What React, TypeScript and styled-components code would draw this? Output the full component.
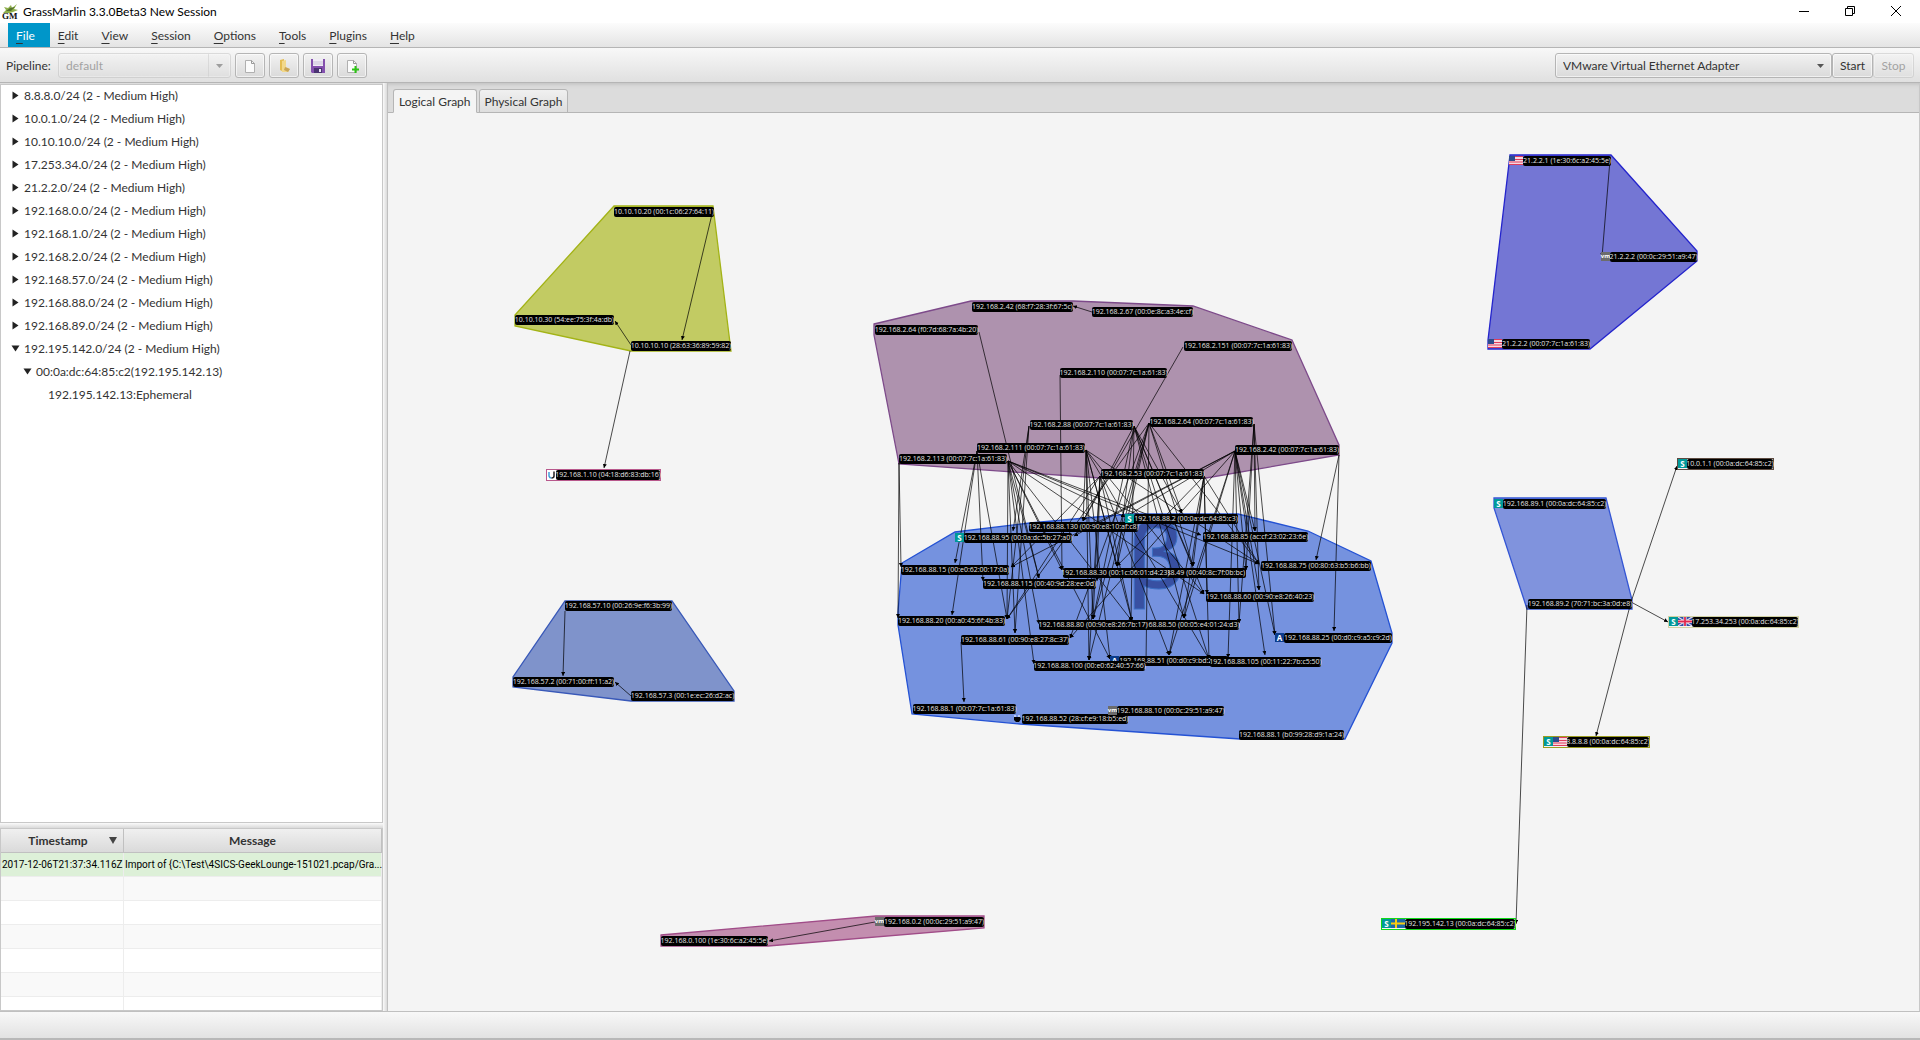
import React, { useState } from 'react';
import styled, { createGlobalStyle, css } from 'styled-components';

const UI_FONT = 'Lato, "Open Sans", sans-serif';
const NODE_FONT = '"Open Sans", "Noto Sans", sans-serif';

const GlobalStyle = createGlobalStyle`
  *, *::before, *::after { box-sizing: border-box; }
  body { margin: 0; background: #fff; }
  button, select { font: inherit; color: inherit; margin: 0; }
`;

const Window = styled.div`
  display: flex;
  flex-direction: column;
  height: 100vh;
  overflow: hidden;
  font-family: ${UI_FONT};
  font-size: 12px;
  line-height: 16px;
  color: #333;
  background: #f4f4f4;
`;

/* ---------- title bar ---------- */

const TitleBar = styled.header`
  display: flex;
  align-items: center;
  flex: 0 0 23px;
  padding-left: 2px;
  gap: 4px;
  background: #fff;
  color: #000;
`;

const Title = styled.h1`
  flex: 1;
  margin: 0;
  font-size: 12px;
  font-weight: 400;
`;

const WindowButtons = styled.div`
  display: flex;
`;

const WindowButton = styled.button`
  display: flex;
  align-items: center;
  justify-content: center;
  width: 46px;
  height: 22px;
  padding: 0 2px 2px 0;
  border: 0;
  background: none;
`;

/* ---------- menu bar ---------- */

const MenuBar = styled.nav`
  display: flex;
  flex: 0 0 25px;
  padding-left: 8px;
  border-bottom: 1px solid #b5b5b5;
  background: linear-gradient(#fcfcfc, #e4e4e4);
`;

const MenuButton = styled.button<{ $active?: boolean }>`
  padding: 2px 15px 0 8px;
  border: 0;
  background: ${(p) => (p.$active ? '#0096c9' : 'transparent')};
  color: ${(p) => (p.$active ? '#fff' : '#333')};
`;

const Mnemonic = styled.span`
  text-decoration: underline;
  text-decoration-color: #333;
  text-decoration-thickness: 1px;
  text-underline-offset: 3px;
`;

/* ---------- tool bar ---------- */

const ToolBar = styled.div`
  display: flex;
  align-items: center;
  flex: 0 0 35px;
  padding: 1px 6px 0;
  gap: 4px;
  border-bottom: 1px solid #b5b5b5;
  background: linear-gradient(#f8f8f8, #e0e0e0);
`;

const control = css`
  height: 25px;
  border: 1px solid #b5b5b5;
  border-radius: 3px;
  background: linear-gradient(#f2f2f2, #dadada);
  box-shadow: inset 0 0 0 1px rgba(255, 255, 255, 0.6);
  &:disabled { opacity: 0.4; }
`;

const PipelineLabel = styled.label`
  width: 48px;
  white-space: nowrap;
`;

const SelectBox = styled.div<{ $width: number; $split?: boolean }>`
  display: grid;
  width: ${(p) => p.$width}px;
  align-items: center;
  & > * { grid-area: 1 / 1; }
  & > svg {
    justify-self: end;
    margin-right: 8px;
    pointer-events: none;
    opacity: ${(p) => (p.$split ? 0.5 : 1)};
  }
  &::after {
    content: '';
    display: ${(p) => (p.$split ? 'block' : 'none')};
    grid-area: 1 / 1;
    justify-self: end;
    width: 23px;
    height: 23px;
    border-left: 1px solid #d0d0d0;
    pointer-events: none;
  }
`;

const Select = styled.select`
  ${control}
  width: 100%;
  appearance: none;
  padding: 0 24px 0 7px;
  color: #333;
`;

const ToolButton = styled.button<{ $icon?: boolean }>`
  ${control}
  display: flex;
  align-items: center;
  justify-content: center;
  width: ${(p) => (p.$icon ? 30 : 41)}px;
  padding: 0;
`;

const Group = styled.div<{ $end?: boolean }>`
  display: flex;
  gap: ${(p) => (p.$end ? 0 : 4)}px;
  margin-left: ${(p) => (p.$end ? 'auto' : 0)};
`;

/* ---------- main split ---------- */

const Main = styled.main`
  display: grid;
  grid-template-columns: 383px 5px minmax(0, 1fr);
  flex: 1;
  min-height: 0;
  background: #ddd;
`;

const SideColumn = styled.aside`
  display: grid;
  grid-template-rows: minmax(0, 1fr) 5px 183px;
  min-height: 0;
  padding-top: 1px;
`;

const VerticalSplitter = styled.div`
  border-right: 1px solid #c0c0c0;
  background: linear-gradient(90deg, #fafafa, #dadada);
`;

const HorizontalSplitter = styled.div`
  background: linear-gradient(#fafafa, #dadada);
`;

const TreePane = styled.div`
  overflow: hidden;
  border: 1px solid #c8c8c8;
  background: #fff;
`;

const TreeList = styled.ul`
  margin: 0;
  padding: 0;
  list-style: none;
`;

const TreeRow = styled.button<{ $level: number }>`
  display: flex;
  align-items: center;
  gap: 5px;
  width: 100%;
  height: 23px;
  padding: 0 0 2px ${(p) => 11 + p.$level * 12}px;
  border: 0;
  background: none;
  text-align: left;
  white-space: nowrap;
`;

const Disclosure = styled.svg<{ $open: boolean }>`
  width: 7px;
  height: 9px;
  transform: rotate(${(p) => (p.$open ? 90 : 0)}deg);
`;

/* ---------- log table ---------- */

const LogPane = styled.div`
  overflow: hidden;
  border: 1px solid #c8c8c8;
  background: #fff;
`;

const LogTable = styled.table`
  width: 100%;
  border-collapse: separate;
  border-spacing: 0;
  table-layout: fixed;
`;

const HeadCell = styled.th<{ $width?: number }>`
  width: ${(p) => (p.$width ? `${p.$width}px` : 'auto')};
  height: 24px;
  padding: 0;
  border-right: 1px solid #c0c0c0;
  border-bottom: 1px solid #c0c0c0;
  background: linear-gradient(#f0f0f0, #dadada);
  font-weight: 700;
`;

const HeadContent = styled.div`
  display: flex;
  align-items: center;
  padding-right: 6px;
`;

const HeadText = styled.span`
  flex: 1;
  padding-left: 6px;
`;

const LogRow = styled.tr<{ $imported?: boolean }>`
  background: ${(p) => (p.$imported ? '#ddf0d8' : '#fff')};
  &:nth-child(even) { background: #f9f9f9; }
`;

const LogCell = styled.td`
  height: 24px;
  padding: 0 0 0 1px;
  border-right: 1px solid #ededed;
  border-bottom: 1px solid #ededed;
  color: #000;
  font-family: Roboto, sans-serif;
  font-size: 10px;
  white-space: nowrap;
`;

/* ---------- graph ---------- */

const GraphPane = styled.section`
  display: flex;
  flex-direction: column;
  min-width: 0;
  border-right: 1px solid #c8c8c8;
`;

const TabStrip = styled.div`
  display: flex;
  align-items: flex-end;
  flex: 0 0 30px;
  gap: 2px;
  padding-left: 5px;
  box-shadow: inset 0 -1px #b5b5b5, inset 0 4px 4px -3px #bbb;
  background: #dcdcdc;
`;

const Tab = styled.button<{ $active?: boolean }>`
  height: 24px;
  padding: 1px 5px 0;
  border: 1px solid #b5b5b5;
  border-bottom-color: ${(p) => (p.$active ? '#f4f4f4' : '#b5b5b5')};
  border-radius: 3px 3px 0 0;
  background: ${(p) => (p.$active ? '#f4f4f4' : 'linear-gradient(#f0f0f0, #dedede)')};
  white-space: nowrap;
`;

const Canvas = styled.div`
  position: relative;
  flex: 1;
  min-height: 0;
  overflow: hidden;
  background: #f4f4f4;
`;

const Scene = styled.div`
  position: absolute;
  width: 1920px;
  height: 1040px;
`;

const Drawing = styled.svg`
  position: absolute;
  inset: 0;
  font-family: ${NODE_FONT};
`;

const Node = styled.div<{ $frame?: string }>`
  position: absolute;
  display: flex;
  border: ${(p) => (p.$frame ? `1px solid ${p.$frame}` : '0')};
  font-family: ${NODE_FONT};
  & > svg { flex: none; }
`;

const NodeLabel = styled.span`
  display: flex;
  flex: 1;
  justify-content: center;
  min-width: 0;
  height: 10px;
  border-radius: 2px;
  background: #000;
  color: #e4e4e4;
  font-size: 7px;
  line-height: 10px;
  white-space: nowrap;
`;

const Badge = styled.span<{ $color: string; $size: number }>`
  display: flex;
  flex: none;
  justify-content: center;
  width: 9px;
  height: 9px;
  background: ${(p) => p.$color};
  color: #fff;
  font-size: ${(p) => p.$size}px;
  font-weight: 700;
  line-height: 9px;
`;

const StatusBar = styled.footer`
  flex: 0 0 29px;
  border-top: 1px solid #c0c0c0;
  border-bottom: 2px solid #b8b8b8;
  background: linear-gradient(#f8f8f8, #e2e2e2);
`;

/* ---------- data ---------- */

type IconKind = 'S' | 'A' | 'vm' | 'U' | 'apple' | 'us' | 'uk' | 'se';

interface GraphNode {
  x: number;
  y: number;
  w: number;
  text: string;
  icons?: IconKind[];
  frame?: string;
}

const MENUS = ['File', 'Edit', 'View', 'Session', 'Options', 'Tools', 'Plugins', 'Help'];

const NETWORKS = [
  '8.8.8.0/24', '10.0.1.0/24', '10.10.10.0/24', '17.253.34.0/24', '21.2.2.0/24',
  '192.168.0.0/24', '192.168.1.0/24', '192.168.2.0/24', '192.168.57.0/24',
  '192.168.88.0/24', '192.168.89.0/24',
];

const HULLS = [
  { fill: '#c2cb63', stroke: '#a3b316', points: '614,206 713,206 731,351 631,351 515,326 515,315' },
  { fill: '#7f93cb', stroke: '#3858b8', points: '565,601 672,601 734,691 734,701 631,701 513,687 513,677' },
  { fill: '#c38eaf', stroke: '#a04c88', points: '661,935 876,916 984,916 984,928 768,946 661,946' },
  { fill: '#7476d4', stroke: '#2424cc', points: '1510,155 1611,155 1697,251 1697,261 1590,349 1488,349 1488,340' },
  { fill: '#8093dd', stroke: '#3355d4', points: '1494,498 1606,498 1632,600 1632,609 1527,609 1494,508' },
  { fill: '#7592df', stroke: '#2452d4', points: '902,563 955,532 1030,523 1130,514 1238,514 1308,531 1371,561 1392,633 1392,643 1345,739 1240,739 1020,724 912,714 898,625 898,612' },
  { fill: '#ae92ae', stroke: '#7d4a8a', points: '874,324 971,301 1073,301 1193,306 1292,340 1339,445 1339,455 1206,478 1100,478 899,464 874,335' },
];

const NODES: GraphNode[] = [
  { x: 614, y: 207, w: 100, text: '10.10.10.20 (00:1c:06:27:64:11)' },
  { x: 515, y: 315, w: 99, text: '10.10.10.30 (54:ee:75:3f:4a:db)' },
  { x: 631, y: 341, w: 100, text: '10.10.10.10 (28:63:36:89:59:82)' },
  { x: 546, y: 469, w: 115, text: '192.168.1.10 (04:18:d6:83:db:16)', icons: ['U'], frame: '#b8588c' },
  { x: 565, y: 601, w: 107, text: '192.168.57.10 (00:26:9e:f6:3b:99)' },
  { x: 513, y: 677, w: 101, text: '192.168.57.2 (00:71:00:ff:11:a2)' },
  { x: 631, y: 691, w: 103, text: '192.168.57.3 (00:1e:ec:26:d2:ac)' },
  { x: 875, y: 917, w: 109, text: '192.168.0.2 (00:0c:29:51:a9:47)', icons: ['vm'] },
  { x: 661, y: 936, w: 107, text: '192.168.0.100 (1e:30:6c:a2:45:5e)' },
  { x: 1509, y: 156, w: 102, text: '21.2.2.1 (1e:30:6c:a2:45:5e)', icons: ['us'] },
  { x: 1601, y: 252, w: 96, text: '21.2.2.2 (00:0c:29:51:a9:47)', icons: ['vm'] },
  { x: 1488, y: 339, w: 102, text: '21.2.2.2 (00:07:7c:1a:61:83)', icons: ['us'] },
  { x: 1494, y: 499, w: 112, text: '192.168.89.1 (00:0a:dc:64:85:c2)', icons: ['S'] },
  { x: 1528, y: 599, w: 104, text: '192.168.89.2 (70:71:bc:3a:0d:e8)' },
  { x: 1677, y: 458, w: 97, text: '10.0.1.1 (00:0a:dc:64:85:c2)', icons: ['S'], frame: '#5c4a40' },
  { x: 1668, y: 616, w: 131, text: '17.253.34.253 (00:0a:dc:64:85:c2)', icons: ['S', 'uk'], frame: '#d2d2a4' },
  { x: 1543, y: 736, w: 107, text: '8.8.8.8 (00:0a:dc:64:85:c2)', icons: ['S', 'us'], frame: '#9c9c20' },
  { x: 1381, y: 918, w: 135, text: '192.195.142.13 (00:0a:dc:64:85:c2)', icons: ['S', 'se'], frame: '#10d818' },

  { x: 972, y: 302, w: 101, text: '192.168.2.42 (68:f7:28:3f:67:5c)' },
  { x: 1092, y: 307, w: 101, text: '192.168.2.67 (00:0e:8c:a3:4e:cf)' },
  { x: 875, y: 325, w: 103, text: '192.168.2.64 (f0:7d:68:7a:4b:20)' },
  { x: 1184, y: 341, w: 108, text: '192.168.2.151 (00:07:7c:1a:61:83)' },
  { x: 1060, y: 368, w: 107, text: '192.168.2.110 (00:07:7c:1a:61:83)' },
  { x: 1030, y: 420, w: 103, text: '192.168.2.88 (00:07:7c:1a:61:83)' },
  { x: 1150, y: 417, w: 103, text: '192.168.2.64 (00:07:7c:1a:61:83)' },
  { x: 977, y: 443, w: 108, text: '192.168.2.111 (00:07:7c:1a:61:83)' },
  { x: 899, y: 454, w: 108, text: '192.168.2.113 (00:07:7c:1a:61:83)' },
  { x: 1101, y: 469, w: 103, text: '192.168.2.53 (00:07:7c:1a:61:83)' },
  { x: 1235, y: 445, w: 104, text: '192.168.2.42 (00:07:7c:1a:61:83)' },

  { x: 1029, y: 522, w: 109, text: '192.168.88.130 (00:90:e8:10:af:c8)' },
  { x: 1125, y: 514, w: 113, text: '192.168.88.2 (00:0a:dc:64:85:c3)', icons: ['S'] },
  { x: 955, y: 533, w: 117, text: '192.168.88.95 (00:0a:dc:5b:27:a0)', icons: ['S'] },
  { x: 1203, y: 532, w: 105, text: '192.168.88.85 (ac:cf:23:02:23:6e)' },
  { x: 901, y: 565, w: 108, text: '192.168.88.15 (00:e0:62:00:17:0a)' },
  { x: 1261, y: 561, w: 110, text: '192.168.88.75 (00:80:63:b5:b6:bb)' },
  { x: 1138, y: 568, w: 108, text: '192.168.88.49 (00:40:8c:7f:0b:bc)' },
  { x: 1063, y: 568, w: 105, text: '192.168.88.30 (00:1c:06:01:d4:23)' },
  { x: 983, y: 579, w: 113, text: '192.168.88.115 (00:40:9d:28:ee:0d)' },
  { x: 1206, y: 592, w: 108, text: '192.168.88.60 (00:90:e8:26:40:23)' },
  { x: 898, y: 616, w: 107, text: '192.168.88.20 (00:a0:45:6f:4b:83)' },
  { x: 1131, y: 620, w: 108, text: '192.168.88.50 (00:05:e4:01:24:d3)' },
  { x: 1039, y: 620, w: 108, text: '192.168.88.80 (00:90:e8:26:7b:17)' },
  { x: 961, y: 635, w: 108, text: '192.168.88.61 (00:90:e8:27:8c:37)' },
  { x: 1275, y: 633, w: 117, text: '192.168.88.25 (00:d0:c9:a5:c9:2d)', icons: ['A'] },
  { x: 1110, y: 656, w: 118, text: '192.168.88.51 (00:d0:c9:bd:2c:11)', icons: ['A'] },
  { x: 1034, y: 661, w: 111, text: '192.168.88.100 (00:e0:62:40:57:66)' },
  { x: 1210, y: 657, w: 111, text: '192.168.88.105 (00:11:22:7b:c5:50)' },
  { x: 913, y: 704, w: 103, text: '192.168.88.1 (00:07:7c:1a:61:83)' },
  { x: 1013, y: 714, w: 115, text: '192.168.88.52 (28:cf:e9:18:b5:ed)', icons: ['apple'] },
  { x: 1108, y: 706, w: 116, text: '192.168.88.10 (00:0c:29:51:a9:47)', icons: ['vm'] },
  { x: 1239, y: 730, w: 105, text: '192.168.88.1 (b0:99:28:d9:1a:24)' },
];

/* Each entry fans out from one port to the ports of its peers. */
const FANS: { from: [number, number]; to: [number, number][] }[] = [
  { from: [713, 210], to: [[682, 340]] },
  { from: [631, 345], to: [[615, 321]] },
  { from: [630, 351], to: [[604, 468]] },
  { from: [565, 611], to: [[563, 676]] },
  { from: [631, 696], to: [[615, 682]] },
  { from: [875, 922], to: [[769, 941]] },
  { from: [1610, 160], to: [[1602, 257]] },
  { from: [1631, 602], to: [[1677, 466], [1668, 622], [1596, 736]] },
  { from: [1527, 605], to: [[1516, 924]] },
  { from: [1092, 312], to: [[1073, 306]] },
  { from: [979, 332], to: [[1039, 578]] },
  { from: [1183, 347], to: [[1083, 521]] },
  { from: [1060, 375], to: [[1062, 570]] },
  { from: [899, 463], to: [[901, 567], [898, 618]] },
  { from: [1008, 461], to: [[1015, 633], [1007, 619], [1039, 578], [1039, 624], [1034, 664], [1062, 570], [1132, 621], [1110, 659], [1259, 564], [1204, 594], [1201, 535], [1125, 517]] },
  { from: [977, 451], to: [[955, 563], [952, 615], [983, 581], [1007, 619]] },
  { from: [1086, 450], to: [[1089, 660], [1093, 619], [1083, 521], [1117, 566], [1110, 659], [1132, 621], [1259, 564], [1204, 594], [1209, 659]] },
  { from: [1029, 426], to: [[1013, 531], [1015, 633], [1007, 619]] },
  { from: [1134, 426], to: [[1083, 521], [1117, 566], [1093, 619], [1131, 621], [1182, 513], [1184, 618], [1204, 594], [1209, 659], [1193, 566]] },
  { from: [1149, 423], to: [[1117, 566], [1093, 619], [1089, 660], [1070, 638], [1007, 619], [1146, 664], [1182, 513], [1193, 566], [1259, 564]] },
  { from: [1254, 424], to: [[1255, 531], [1259, 590], [1246, 570], [1275, 635], [1239, 623]] },
  { from: [1100, 476], to: [[1011, 567], [1007, 619], [1089, 660], [1093, 619], [1097, 581], [1132, 621], [1169, 655]] },
  { from: [1204, 476], to: [[1193, 566], [1184, 618], [1169, 655], [1209, 659], [1259, 564], [1207, 594], [1117, 566]] },
  { from: [1235, 451], to: [[1255, 531], [1259, 590], [1275, 635], [1265, 655], [1246, 570], [1239, 623], [1228, 658], [1125, 517], [1074, 536], [1011, 567], [1070, 638], [1169, 655], [1184, 618]] },
  { from: [1339, 455], to: [[1316, 560], [1334, 631]] },
  { from: [961, 642], to: [[964, 702]] },
];

/* ---------- icons ---------- */

const Logo = () => (
  <svg width="17" height="16" viewBox="0 0 17 16" aria-hidden="true">
    <path d="M1 9 L4 6 L2 3 L6 4 L9 1 L10 4 L15 0 L12 5 L16 6 L11 8 L8 9 Z" fill="#8fb04c" />
    <path d="M4 7 L8 4 L13 3 L9 7 Z" fill="#55722c" />
    <text x="0" y="15" fontSize="9" fontWeight="700" fontFamily="Liberation Serif, serif" fill="#111">GM</text>
  </svg>
);

const ArrowDown = () => (
  <svg width="7" height="4" viewBox="0 0 7 4" aria-hidden="true">
    <path d="M0 0 H7 L3.5 4 Z" fill="#555" />
  </svg>
);

const PageIcon = ({ plus }: { plus?: boolean }) => (
  <svg width="16" height="16" viewBox="0 0 16 16" aria-hidden="true">
    <path d="M3.5 2.5 H9.5 L12.5 5.5 V14.5 H3.5 Z" fill="#fbfbfb" stroke="#b0b0b0" />
    <path d="M9.5 2.5 V5.5 H12.5" fill="none" stroke="#999" />
    {plus && <path d="M11.5 8 V15 M8 11.5 H15" stroke="#2cc414" strokeWidth="2" />}
  </svg>
);

const FolderIcon = () => (
  <svg width="16" height="16" viewBox="0 0 16 16" aria-hidden="true">
    <path d="M4 2 L8 1 V14 L4 12 Z" fill="#e4bc50" />
    <path d="M6 3 L10 2 V9 L14 11 L12 14 L6 14 Z" fill="#f2d88a" />
    <path d="M9 9 L14 11 L12 14 L8 12 Z" fill="#c8a458" />
  </svg>
);

const SaveIcon = () => (
  <svg width="16" height="16" viewBox="0 0 16 16" aria-hidden="true">
    <path d="M1 1 H15 V15 H2 L1 14 Z" fill="#8450ae" />
    <path d="M3 1 H13 V8 H3 Z" fill="#f0ecf6" />
    <path d="M3 4 H13 M3 6 H13" stroke="#c8c0d8" />
    <path d="M4 10 H12 V15 H4 Z" fill="#4a3472" />
    <path d="M9 11 H11 V14 H9 Z" fill="#ece6f4" />
  </svg>
);

const UsFlag = () => (
  <svg width="14" height="9" viewBox="0 0 14 9" aria-hidden="true">
    <path d="M0 0 H14 V9 H0 Z" fill="#f6d8e0" />
    <path d="M0 0.5 H14 M0 3.5 H14 M0 6 H14 M0 8.5 H14" stroke="#e03c5c" strokeWidth="1.2" />
    <path d="M0 0 H6 V5 H0 Z" fill="#2c4c8c" />
  </svg>
);

const UkFlag = () => (
  <svg width="14" height="9" viewBox="0 0 14 9" aria-hidden="true">
    <path d="M0 0 H14 V9 H0 Z" fill="#3050a8" />
    <path d="M0 0 L14 9 M14 0 L0 9" stroke="#e8d8e8" strokeWidth="1.2" />
    <path d="M7 0 V9 M0 4.5 H14" stroke="#fff" strokeWidth="3" />
    <path d="M7 0 V9 M0 4.5 H14" stroke="#e02850" strokeWidth="1.8" />
  </svg>
);

const SeFlag = () => (
  <svg width="14" height="9" viewBox="0 0 14 9" aria-hidden="true">
    <path d="M0 0 H14 V9 H0 Z" fill="#1c68a8" />
    <path d="M5 0 V9 M0 4.5 H14" stroke="#f8cc10" strokeWidth="2" />
  </svg>
);

const UbiquitiIcon = () => (
  <svg width="9" height="10" viewBox="0 0 9 10" aria-hidden="true">
    <path d="M0 0 H9 V10 H0 Z" fill="#fff" />
    <path d="M2 2 V6 Q2.5 8 4.5 8" fill="none" stroke="#40a0dc" strokeWidth="1.5" />
    <path d="M4.5 8 Q7 8 7 6 V1.5" fill="none" stroke="#222" strokeWidth="1.5" />
  </svg>
);

const AppleIcon = () => (
  <svg width="9" height="10" viewBox="0 0 9 10" aria-hidden="true">
    <path d="M1 3 H7 L8 5 L6 8 H3 L1 6 Z" fill="#000" />
    <path d="M1 2 H3 M5 2 H7" stroke="#fff" />
  </svg>
);

const NodeIcon = ({ kind }: { kind: IconKind }) => {
  switch (kind) {
    case 'S': return <Badge $color="#009999" $size={8}>S</Badge>;
    case 'A': return <Badge $color="#0b3c8c" $size={8}>A</Badge>;
    case 'vm': return <Badge $color="#6c6c6c" $size={6}>vm</Badge>;
    case 'us': return <UsFlag />;
    case 'uk': return <UkFlag />;
    case 'se': return <SeFlag />;
    case 'U': return <UbiquitiIcon />;
    case 'apple': return <AppleIcon />;
  }
};

/* ---------- views ---------- */

const TreeItem = ({ level, text, open, leaf }: { level: number; text: string; open?: boolean; leaf?: boolean }) => (
  <TreeRow $level={level} aria-expanded={leaf ? undefined : !!open}>
    {leaf ? (
      <Disclosure $open={false} aria-hidden="true" />
    ) : (
      <Disclosure $open={!!open} viewBox="0 0 7 9" aria-hidden="true">
        <path d="M0.5 0.5 L6.5 4.5 L0.5 8.5 Z" fill="#222" />
      </Disclosure>
    )}
    {text}
  </TreeRow>
);

const LogicalGraph = () => {
  const [pan] = useState({ x: -388, y: -113 });
  return (
    <Canvas>
      <Scene style={{ left: pan.x, top: pan.y }}>
        <Drawing width="1920" height="1040" viewBox="0 0 1920 1040">
          <defs>
            <marker id="head" markerWidth="5" markerHeight="5" refX="4" refY="2" orient="auto" markerUnits="userSpaceOnUse">
              <path d="M0 0 L4 2 L0 4 Z" fill="#000" />
            </marker>
          </defs>
          {HULLS.map((h) => (
            <polygon key={h.points} points={h.points} fill={h.fill} stroke={h.stroke} strokeWidth="1.3" />
          ))}
          <text x="1127" y="588" fontSize="88" fontWeight="600" fill="#3850a2" stroke="#3c70c4" strokeWidth="1">β</text>
          {FANS.map((fan) =>
            fan.to.map(([x, y]) => (
              <line
                key={`${fan.from}-${x}-${y}`}
                x1={fan.from[0]}
                y1={fan.from[1]}
                x2={x}
                y2={y}
                stroke="#000"
                strokeOpacity="0.7"
                strokeWidth="1"
                markerEnd="url(#head)"
              />
            )),
          )}
        </Drawing>
        {NODES.map((n) => (
          <Node key={`${n.x}-${n.y}`} $frame={n.frame} style={{ left: n.x, top: n.y, width: n.w }}>
            {n.icons?.map((kind) => <NodeIcon key={kind} kind={kind} />)}
            <NodeLabel>{n.text}</NodeLabel>
          </Node>
        ))}
      </Scene>
    </Canvas>
  );
};

export default function App() {
  return (
    <Window>
      <GlobalStyle />
      <TitleBar>
        <Logo />
        <Title>GrassMarlin 3.3.0Beta3 New Session</Title>
        <WindowButtons>
          <WindowButton aria-label="Minimize">
            <svg width="10" height="10"><path d="M0 5.5 H10" stroke="#000" /></svg>
          </WindowButton>
          <WindowButton aria-label="Restore">
            <svg width="10" height="10" fill="none" stroke="#000">
              <path d="M0.5 2.5 H7.5 V9.5 H0.5 Z M2.5 2.5 V0.5 H9.5 V7.5 H7.5" />
            </svg>
          </WindowButton>
          <WindowButton aria-label="Close">
            <svg width="10" height="10"><path d="M0 0 L10 10 M10 0 L0 10" stroke="#000" /></svg>
          </WindowButton>
        </WindowButtons>
      </TitleBar>

      <MenuBar>
        {MENUS.map((m) => (
          <MenuButton key={m} $active={m === 'File'}>
            <Mnemonic>{m[0]}</Mnemonic>{m.slice(1)}
          </MenuButton>
        ))}
      </MenuBar>

      <ToolBar>
        <PipelineLabel htmlFor="pipeline">Pipeline:</PipelineLabel>
        <SelectBox $width={173} $split>
          <Select id="pipeline" disabled><option>default</option></Select>
          <ArrowDown />
        </SelectBox>
        <Group>
          <ToolButton $icon aria-label="New session"><PageIcon /></ToolButton>
          <ToolButton $icon aria-label="Open session"><FolderIcon /></ToolButton>
          <ToolButton $icon aria-label="Save session"><SaveIcon /></ToolButton>
          <ToolButton $icon aria-label="Import files"><PageIcon plus /></ToolButton>
        </Group>
        <Group $end>
          <SelectBox $width={277}>
            <Select aria-label="Capture device"><option>VMware Virtual Ethernet Adapter</option></Select>
            <ArrowDown />
          </SelectBox>
          <ToolButton>Start</ToolButton>
          <ToolButton disabled>Stop</ToolButton>
        </Group>
      </ToolBar>

      <Main>
        <SideColumn>
          <TreePane>
            <TreeList>
              {NETWORKS.map((n) => (
                <li key={n}><TreeItem level={0} text={`${n} (2 - Medium High)`} /></li>
              ))}
              <li>
                <TreeItem level={0} open text="192.195.142.0/24 (2 - Medium High)" />
                <TreeList>
                  <li>
                    <TreeItem level={1} open text="00:0a:dc:64:85:c2(192.195.142.13)" />
                    <TreeList>
                      <li><TreeItem level={2} leaf text="192.195.142.13:Ephemeral" /></li>
                    </TreeList>
                  </li>
                </TreeList>
              </li>
            </TreeList>
          </TreePane>
          <HorizontalSplitter />
          <LogPane>
            <LogTable>
              <thead>
                <tr>
                  <HeadCell $width={123}>
                    <HeadContent>
                      <HeadText>Timestamp</HeadText>
                      <svg width="8" height="8" aria-hidden="true"><path d="M0 0 H8 L4 7 Z" fill="#444" /></svg>
                    </HeadContent>
                  </HeadCell>
                  <HeadCell>Message</HeadCell>
                </tr>
              </thead>
              <tbody>
                <LogRow $imported>
                  <LogCell>2017-12-06T21:37:34.116Z</LogCell>
                  <LogCell>{'Import of {C:\\Test\\4SICS-GeekLounge-151021.pcap/Gra...'}</LogCell>
                </LogRow>
                {[1, 2, 3, 4, 5, 6].map((i) => (
                  <LogRow key={i}><LogCell /><LogCell /></LogRow>
                ))}
              </tbody>
            </LogTable>
          </LogPane>
        </SideColumn>
        <VerticalSplitter />
        <GraphPane>
          <TabStrip role="tablist">
            <Tab $active role="tab" aria-selected="true">Logical Graph</Tab>
            <Tab role="tab" aria-selected="false">Physical Graph</Tab>
          </TabStrip>
          <LogicalGraph />
        </GraphPane>
      </Main>
      <StatusBar />
    </Window>
  );
}
